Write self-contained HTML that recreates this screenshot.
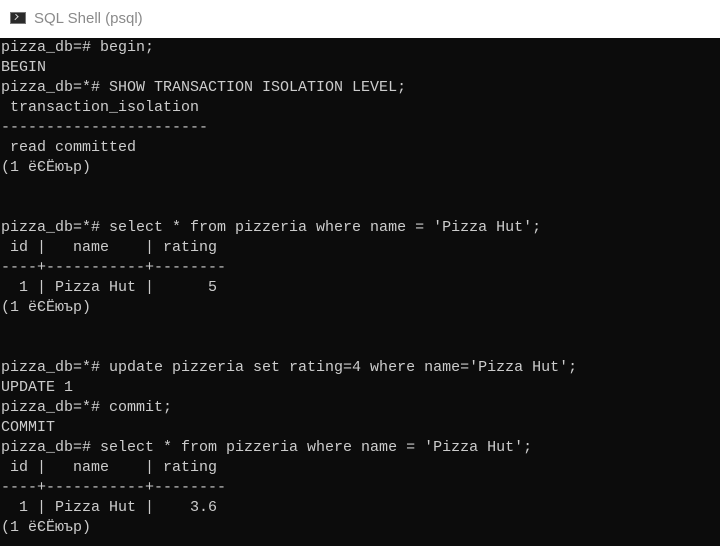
<!DOCTYPE html>
<html><head><style>
html,body{margin:0;padding:0;width:720px;height:546px;overflow:hidden;background:#0c0c0c}
.t{position:absolute;left:0;top:0;width:720px;height:38px;background:#fff}
.t span{position:absolute;left:34px;top:10px;font:15px "Liberation Sans",sans-serif;color:#8a8a8a}
.ic{position:absolute;left:10px;top:12px;width:16px;height:12px;background:#2a2a2a;border:1px solid #777;box-sizing:border-box}
.ic:after{content:"";position:absolute;left:2px;top:2px;width:4px;height:3px;border-right:1px solid #ddd;border-bottom:1px solid #ddd;transform:rotate(-45deg)}
pre{position:absolute;left:1px;top:38px;margin:0;font:15px/20px "Liberation Mono",monospace;color:#cccccc;letter-spacing:0px}
</style></head><body>
<div class="t"><div class="ic"></div><span>SQL Shell (psql)</span></div>
<pre>pizza_db=# begin;
BEGIN
pizza_db=*# SHOW TRANSACTION ISOLATION LEVEL;
 transaction_isolation
-----------------------
 read committed
(1 ёЄЁюър)


pizza_db=*# select * from pizzeria where name = 'Pizza Hut';
 id |   name    | rating
----+-----------+--------
  1 | Pizza Hut |      5
(1 ёЄЁюър)


pizza_db=*# update pizzeria set rating=4 where name='Pizza Hut';
UPDATE 1
pizza_db=*# commit;
COMMIT
pizza_db=# select * from pizzeria where name = 'Pizza Hut';
 id |   name    | rating
----+-----------+--------
  1 | Pizza Hut |    3.6
(1 ёЄЁюър)</pre>
</body></html>
